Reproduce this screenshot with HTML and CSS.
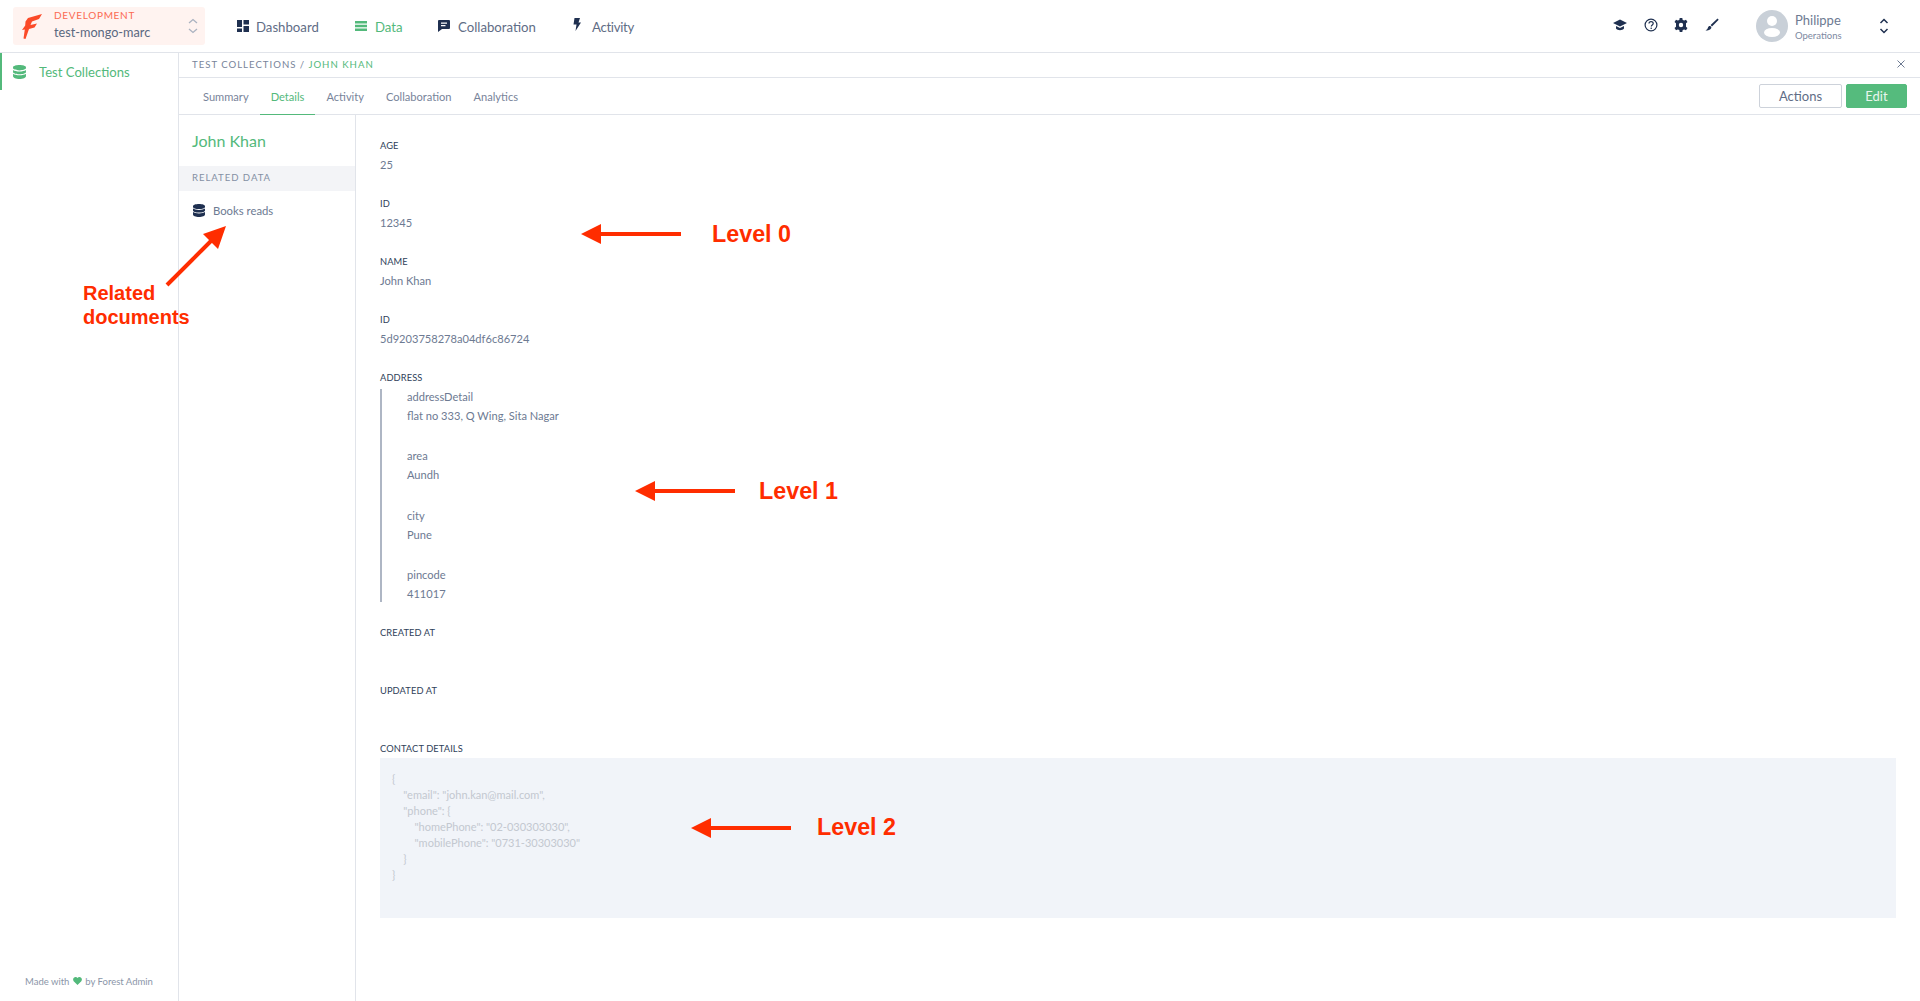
FILE: index.html
```html
<!DOCTYPE html>
<html>
<head>
	<title>Test Collections - John Khan</title>
	<meta charset="utf-8">
	<link rel="stylesheet" href="styles.css">
</head>
<body>

	<header class="topbar">
		<div class="env">
			<svg class="env-logo" viewBox="0 0 20 25"><path d="M6 4 L20 0 L17 5 L10 7.500 L8.500 11 L15 9.500 L12.500 13.500 L7 15 L3.500 25 L1.500 24.500 L2.800 15.500 L0 16 L3.200 11.500 L3.500 7.500 Z"/></svg>
			<div class="env-text">
				<div class="env-label">DEVELOPMENT</div>
				<div class="env-name">test-mongo-marc</div>
			</div>
			<svg class="env-arrows" viewBox="0 0 10 16"><path d="M1 5 L5 1.500 L9 5 M1 11 L5 14.500 L9 11"/></svg>
		</div>

		<nav class="nav">
			<a class="nav-item nav-dashboard">
				<svg class="nav-icon" viewBox="0 0 12 12"><path d="M0 0H5V7H0ZM6.500 0H12V4.500H6.500ZM6.500 6H12V12H6.500ZM0 8.500H5V12H0Z"/></svg>
				Dashboard
			</a>
			<a class="nav-item nav-data active">
				<svg class="nav-icon" viewBox="0 0 12 12"><path d="M0 1H12V3.500H0ZM0 4.800H12V7.300H0ZM0 8.600H12V11.100H0Z"/></svg>
				Data
			</a>
			<a class="nav-item nav-collab">
				<svg class="nav-icon" viewBox="0 0 12 12"><path d="M1 0H11A1 1 0 0 1 12 1V8A1 1 0 0 1 11 9H4L0 12V1A1 1 0 0 1 1 0ZM3 2.500V3.700H9V2.500ZM3 5V6.200H7.500V5Z" fill-rule="evenodd"/></svg>
				Collaboration
			</a>
			<a class="nav-item nav-activity">
				<svg class="nav-icon nav-icon-bolt" viewBox="0 0 8 13"><path d="M1.500 0H7L5.500 4.500H8L2.500 13L3.500 6.500H0.500Z"/></svg>
				Activity
			</a>
		</nav>

		<div class="tools">
			<svg class="tool" viewBox="0 0 14 12"><path d="M7 0.500L14 4L7 7.500L0 4ZM3 7L7 9L11 7V9.500C9.500 11.800 4.500 11.800 3 9.500Z"/></svg>
			<svg class="tool" viewBox="0 0 14 14"><circle cx="7" cy="7" r="5.900" fill="none" stroke="#1f3050" stroke-width="1.200"/><path d="M5 5.600C5 3 9.200 3 9.200 5.500C9.200 7 7.300 7 7.300 8.500" fill="none" stroke="#1f3050" stroke-width="1.200"/><circle cx="7.200" cy="10.300" r="0.800"/></svg>
			<svg class="tool" viewBox="0 0 14 14"><path d="M5.700 0H8.300L8.700 1.900L10.200 2.600L12 1.700L13.500 4L12 5.300V8.700L13.500 10L12 12.300L10.200 11.400L8.700 12.100L8.300 14H5.700L5.300 12.100L3.800 11.400L2 12.300L0.500 10L2 8.700V5.300L0.500 4L2 1.700L3.800 2.600L5.300 1.900ZM7 4.800A2.200 2.200 0 1 0 7 9.200A2.200 2.200 0 1 0 7 4.800Z" fill-rule="evenodd"/></svg>
			<svg class="tool" viewBox="0 0 14 14"><path d="M12.500 0.500L13.700 1.700L7 8.500L5.600 7.100ZM4.800 8C6 8 6.700 9 6.200 10.200C5.500 12 3 12.500 0.500 12.500C2 11.500 2.600 10.800 2.900 9.700C3.200 8.600 3.900 8 4.800 8Z"/></svg>
		</div>

		<div class="user">
			<svg class="avatar" viewBox="0 0 32 32"><circle cx="16" cy="16" r="16" fill="#c9d0d8"/><circle cx="16" cy="11" r="5" fill="#fff"/><ellipse cx="16" cy="22.500" rx="8" ry="4.500" fill="#fff"/></svg>
			<div class="user-text">
				<div class="user-name">Philippe</div>
				<div class="user-role">Operations</div>
			</div>
			<svg class="user-arrows" viewBox="0 0 10 16"><path d="M1.500 5 L5 1.500 L8.500 5 M1.500 11 L5 14.500 L8.500 11"/></svg>
		</div>
	</header>

	<div class="main">
		<aside class="sidebar">
			<a class="side-item">
				<svg class="db-icon" viewBox="0 0 12 13"><path d="M6 0C9.300 0 12 .9 12 2.100V2.900C12 4.100 9.300 5 6 5S0 4.100 0 2.900V2.100C0 .9 2.700 0 6 0ZM0 4.600C1.200 5.500 3.500 6 6 6S10.800 5.500 12 4.600V6.400C12 7.600 9.300 8.500 6 8.500S0 7.600 0 6.400ZM0 8.100C1.200 9 3.500 9.500 6 9.500S10.800 9 12 8.100V10.500C12 11.900 9.300 13 6 13S0 11.900 0 10.500Z"/></svg>
				Test Collections
			</a>
			<div class="made-with">Made with <svg class="heart" viewBox="0 0 10 9"><path d="M5 9L0.700 4.700C-1 2.500 1 0 2.800 0C3.800 0 4.500 .5 5 1.200C5.500 .5 6.200 0 7.200 0C9 0 11 2.500 9.300 4.700Z"/></svg> by Forest Admin</div>
		</aside>

		<div class="content">
			<div class="crumbs">
				<span>TEST COLLECTIONS / <em>JOHN KHAN</em></span>
				<svg class="close" viewBox="0 0 8 8"><path d="M0.500 0.500L7.500 7.500M7.500 0.500L0.500 7.500"/></svg>
			</div>

			<div class="tabs">
				<a class="tab">Summary</a>
				<a class="tab active">Details</a>
				<a class="tab">Activity</a>
				<a class="tab">Collaboration</a>
				<a class="tab">Analytics</a>
				<div class="actions">
					<button class="btn">Actions</button>
					<button class="btn btn-green">Edit</button>
				</div>
			</div>

			<div class="record">
				<div class="related">
					<h2 class="record-name">John Khan</h2>
					<div class="related-head">RELATED DATA</div>
					<a class="related-item">
						<svg class="db-icon" viewBox="0 0 12 13"><path d="M6 0C9.300 0 12 .9 12 2.100V2.900C12 4.100 9.300 5 6 5S0 4.100 0 2.900V2.100C0 .9 2.700 0 6 0ZM0 4.600C1.200 5.500 3.500 6 6 6S10.800 5.500 12 4.600V6.400C12 7.600 9.300 8.500 6 8.500S0 7.600 0 6.400ZM0 8.100C1.200 9 3.500 9.500 6 9.500S10.800 9 12 8.100V10.500C12 11.900 9.300 13 6 13S0 11.900 0 10.500Z"/></svg>
						Books reads
					</a>
				</div>

				<div class="details">
					<div class="field">
						<div class="label">AGE</div>
						<div class="value">25</div>
					</div>
					<div class="field">
						<div class="label">ID</div>
						<div class="value">12345</div>
					</div>
					<div class="field">
						<div class="label">NAME</div>
						<div class="value">John Khan</div>
					</div>
					<div class="field">
						<div class="label">ID</div>
						<div class="value">5d9203758278a04df6c86724</div>
					</div>
					<div class="field">
						<div class="label">ADDRESS</div>
						<div class="nested">
							<div class="sub">
								<div class="value sub-label">addressDetail</div>
								<div class="value">flat no 333, Q Wing, Sita Nagar</div>
							</div>
							<div class="sub">
								<div class="value sub-label">area</div>
								<div class="value">Aundh</div>
							</div>
							<div class="sub">
								<div class="value sub-label">city</div>
								<div class="value">Pune</div>
							</div>
							<div class="sub">
								<div class="value sub-label">pincode</div>
								<div class="value">411017</div>
							</div>
						</div>
					</div>
					<div class="field">
						<div class="label">CREATED AT</div>
						<div class="value"></div>
					</div>
					<div class="field">
						<div class="label">UPDATED AT</div>
						<div class="value"></div>
					</div>
					<div class="field">
						<div class="label">CONTACT DETAILS</div>
						<pre class="code">{
    "email": "john.kan@mail.com",
    "phone": {
        "homePhone": "02-030303030",
        "mobilePhone": "0731-30303030"
    }
}</pre>
					</div>
				</div>
			</div>
		</div>
	</div>

	<!-- red notes drawn on top of the screenshot -->
	<svg class="note-arrow note-arrow-related" viewBox="0 0 64 62"><path d="M3 60L48 15" stroke="#ff2d00" stroke-width="4" fill="none"/><path d="M62 1L54 24L39 9Z" fill="#ff2d00"/></svg>
	<div class="note note-related">Related<br>documents</div>

	<svg class="note-arrow note-arrow-h note-arrow-0" viewBox="0 0 100 20"><path d="M0 10L20 0V8H100V12H20V20Z" fill="#ff2d00"/></svg>
	<div class="note note-0">Level 0</div>

	<svg class="note-arrow note-arrow-h note-arrow-1" viewBox="0 0 100 20"><path d="M0 10L20 0V8H100V12H20V20Z" fill="#ff2d00"/></svg>
	<div class="note note-1">Level 1</div>

	<svg class="note-arrow note-arrow-h note-arrow-2" viewBox="0 0 100 20"><path d="M0 10L20 0V8H100V12H20V20Z" fill="#ff2d00"/></svg>
	<div class="note note-2">Level 2</div>

</body>
</html>
```

FILE: styles.css
```css
*, *:before, *:after { box-sizing: border-box; }

html, body { height: 100%; }

body {
	margin: 0; height: 1001px; overflow: hidden; display: flex; flex-direction: column;
	background-color: #fff; color: #6d7a92; font-family: "Lato", sans-serif; font-size: 12px;
}

svg { display: block; flex: none; }
a { display: flex; align-items: center; }

/* top bar */
.topbar {
	height: 53px; flex: none; display: flex; align-items: center; padding: 0 0 0 13px;
	border-bottom: 1px solid #e1e4ea;
}

.env {
	width: 192px; height: 38px; margin-top: -1px; flex: none; display: flex; align-items: center;
	padding: 0 7px 0 9px; background-color: #fff3f0; border-radius: 3px;
}
.env-logo { width: 20px; height: 25px; margin-top: 1px; fill: #fb4a28; }
.env-text { margin-left: 12px; flex: 1; }
.env-label { font-size: 10px; line-height: 13px; letter-spacing: 0.700px; color: #fb6a52; }
.env-name { font-size: 12.700px; line-height: 19px; margin-top: 1px; color: #5a6880; }
.env-arrows { width: 10px; height: 16px; fill: none; stroke: #aab2c0; stroke-width: 1.300; }

.nav { display: flex; margin-left: 32px; margin-top: 1px; }
.nav-item { font-size: 13.200px; color: #5f6d86; }
.nav-icon { width: 12px; height: 12px; margin-right: 7px; fill: #1f3050; margin-top: -2px; }
.nav-icon-bolt { width: 8px; height: 13px; margin-right: 11px; margin-top: -5px; }
.nav-dashboard { width: 118px; }
.nav-data { width: 83px; }
.nav-collab { width: 135px; }
.nav-collab .nav-icon { margin-right: 8px; }
.nav-activity { letter-spacing: -0.300px; }
.nav-item.active { color: #53b97b; }
.nav-item.active .nav-icon { fill: #53b97b; margin-right: 8px; }

.tools { display: flex; margin-left: auto; width: 118px; }
.tool { width: 14px; height: 14px; margin-right: 16.500px; fill: #1f3050; margin-top: -2px; }

.user { display: flex; align-items: center; width: 164px; margin-left: 25px; }
.avatar { width: 32px; height: 32px; }
.user-text { margin-left: 7px; flex: 1; }
.user-name { font-size: 13px; line-height: 17px; margin-top: 2px; color: #6d7a92; }
.user-role { font-size: 9.500px; line-height: 13px; color: #7d899f; }
.user-arrows { width: 10px; height: 16px; margin-right: 31px; fill: none; stroke: #1f3050; stroke-width: 1.500; }

/* left column */
.main { flex: 1; display: flex; min-height: 0; }

.sidebar {
	width: 179px; flex: none; display: flex; flex-direction: column;
	border-right: 1px solid #e1e4ea;
}
.side-item {
	height: 37px; padding-left: 11px; border-left: 2px solid #53b97b;
	font-size: 13.100px; color: #53b97b;
}
.side-item .db-icon { width: 13px; height: 14px; margin-right: 13px; fill: #53b97b; }
.made-with {
	margin-top: auto; height: 40px; padding-left: 25px; display: flex; align-items: center;
	font-size: 9.500px; color: #8b96a8; white-space: pre;
}
.heart { width: 9px; height: 8px; fill: #53b97b; margin: 0 1px; }

/* record */
.content { flex: 1; display: flex; flex-direction: column; min-width: 0; }

.crumbs {
	height: 25px; flex: none; display: flex; align-items: center; justify-content: space-between;
	padding: 0 15px 2px 13px; border-bottom: 1px solid #e1e4ea;
	font-size: 9.600px; letter-spacing: 1px; color: #78849a;
}
.crumbs em { font-style: normal; color: #53b97b; }
.close { width: 8px; height: 8px; fill: none; stroke: #6d7a92; stroke-width: 1; }

.tabs {
	height: 37px; flex: none; display: flex; align-items: stretch; padding-left: 13px;
	border-bottom: 1px solid #e1e4ea;
}
.tab { padding: 0 11px; font-size: 11.100px; color: #78849a; margin-bottom: -1px; border-bottom: 1px solid transparent; }
.tab.active { color: #53b97b; border-bottom-color: #53b97b; }

.actions { margin-left: auto; display: flex; align-items: center; padding-right: 13px; margin-bottom: 1px; }
.btn {
	width: 83px; height: 24px; margin-right: 4px; padding: 0;
	font-family: "Lato", sans-serif; font-size: 13px; color: #5f6d86;
	background-color: #fff; border: 1px solid #cdd2da; border-radius: 2px;
}
.btn-green { width: 61px; margin-right: 0; color: #e8f6ee; background-color: #55bb7d; border-color: #55bb7d; }

.record { flex: 1; display: flex; min-height: 0; }

.related { width: 177px; flex: none; border-right: 1px solid #e1e4ea; }
.record-name { margin: 0; height: 51px; padding: 16px 0 0 13px; font-size: 16px; line-height: 20px; font-weight: 400; color: #53b97b; }
.related-head {
	height: 25px; line-height: 24px; padding-left: 13px; background-color: #f3f4f7;
	font-size: 9.600px; letter-spacing: 0.950px; color: #8490a4;
}
.related-item { height: 39px; padding-left: 14px; font-size: 11.300px; color: #6d7a92; }
.related-item .db-icon { width: 12px; height: 13px; margin-right: 8px; fill: #1f3050; }

.details { flex: 1; padding: 23px 24px 0 24px; min-width: 0; }

.field { padding-bottom: 23px; }
.label { font-size: 9.300px; line-height: 16px; color: #2f3f5a; letter-spacing: 0.100px; }
.value { font-size: 11.100px; line-height: 16px; min-height: 16px; margin-top: 3px; color: #6d7a92; }

.nested { margin-top: 3px; padding-left: 25px; border-left: 2px solid #aeb6c4; display: flex; flex-direction: column; gap: 24.300px; }
.sub-label { margin-top: 0; }

.code {
	margin: 1px 0 0; height: 160px; padding: 13px 12px 0; background-color: #f1f4f9;
	font-family: "Lato", sans-serif; font-size: 11px; line-height: 16px; color: #c3c8d0;
}

/* annotations */
.note {
	position: absolute; font-family: "Liberation Sans", sans-serif; font-weight: 700;
	color: #ff2d00; font-size: 23.300px; line-height: 24px; white-space: nowrap;
}
.note-0 { left: 712px; top: 222px; }
.note-1 { left: 759px; top: 479px; }
.note-2 { left: 817px; top: 815px; }
.note-related { left: 83px; top: 281px; font-size: 20px; }

.note-arrow { position: absolute; }
.note-arrow-h { width: 100px; height: 20px; }
.note-arrow-0 { left: 581px; top: 224px; }
.note-arrow-1 { left: 635px; top: 481px; }
.note-arrow-2 { left: 691px; top: 818px; }
.note-arrow-related { left: 164px; top: 225px; width: 64px; height: 62px; }
```
